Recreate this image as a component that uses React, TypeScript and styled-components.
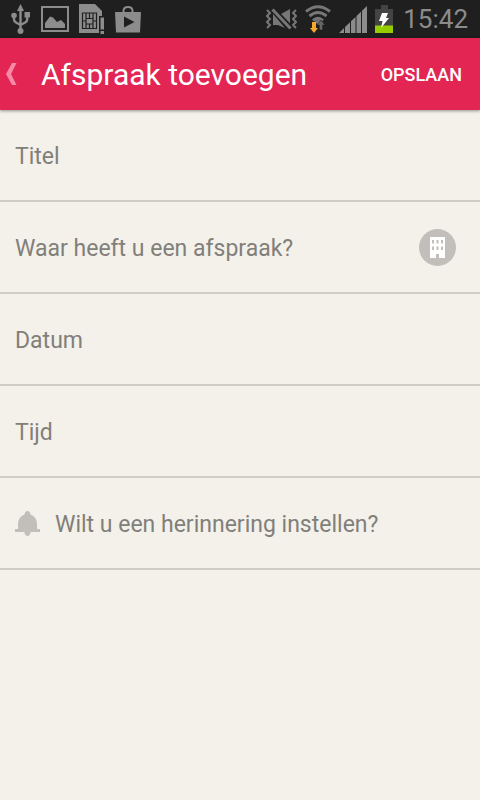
import React from "react";
import styled, { createGlobalStyle } from "styled-components";

const GlobalStyle = createGlobalStyle`
  *, *::before, *::after { box-sizing: border-box; }
  body {
    margin: 0;
    background: #f4f1ea;
    font-family: Roboto, "Noto Sans", sans-serif;
  }
`;

const Screen = styled.div`
  display: flex;
  flex-direction: column;
  min-height: 100vh;
  background: #f4f1ea;
`;

const StatusBar = styled.div`
  display: flex;
  align-items: center;
  justify-content: space-between;
  height: 38px;
  padding: 0 12px 0 10px;
  background: #1f1f1f;
  color: #8c8c8c;
`;

const StatusGroup = styled.div<{ $gap: number }>`
  display: flex;
  align-items: center;
  gap: ${(p) => p.$gap}px;

  svg { display: block; flex: none; }
`;

const Clock = styled.time`
  padding-left: 2px;
  font-size: 26px;
  line-height: 38px;
  color: #8c8c8c;
`;

const AppBar = styled.header`
  display: flex;
  align-items: center;
  height: 72px;
  padding: 0 18px 0 6px;
  background: #e22553;
  color: #fff;
  box-shadow: 0 1px 3px rgba(0, 0, 0, 0.4);
`;

const BackButton = styled.button`
  display: flex;
  width: 35px;
  padding: 0;
  border: 0;
  background: none;
  cursor: pointer;
`;

const Title = styled.h1`
  flex: 1;
  margin: 0;
  padding-top: 2px;
  font-size: 30px;
  line-height: 36px;
  font-weight: 400;
  white-space: nowrap;
`;

const SaveButton = styled.button`
  padding: 2px 0 0;
  border: 0;
  background: none;
  color: #fff;
  font: 500 18px/24px Roboto, "Noto Sans", sans-serif;
  cursor: pointer;
`;

const Form = styled.form`
  display: flex;
  flex-direction: column;
`;

const Row = styled.div`
  display: flex;
  align-items: center;
  height: 92px;
  padding: 0 24px 0 15px;
  border-bottom: 2px solid #cfccc6;
`;

const Field = styled.input`
  flex: 1;
  min-width: 0;
  height: 88px;
  padding: 2px 0 0;
  border: 0;
  outline: 0;
  background: none;
  color: #55534f;
  font: 400 23px/32px Roboto, "Noto Sans", sans-serif;

  &::placeholder { color: #817f7a; opacity: 1; }
`;

const PlaceButton = styled.button`
  display: flex;
  align-items: center;
  justify-content: center;
  width: 37px;
  height: 37px;
  padding: 0;
  border: 0;
  border-radius: 50%;
  background: #c2bfbb;
  cursor: pointer;
`;

const ReminderButton = styled.button`
  display: flex;
  align-items: center;
  flex: 1;
  gap: 15px;
  height: 88px;
  padding: 0;
  border: 0;
  background: none;
  color: #817f7a;
  font: 400 23px/32px Roboto, "Noto Sans", sans-serif;
  text-align: left;
  white-space: nowrap;
  cursor: pointer;
`;

const ReminderText = styled.span`
  padding-top: 3px;
`;

const UsbIcon = () => (
  <svg width="21" height="30" viewBox="0 0 21 30" fill="currentColor" aria-hidden="true">
    <path d="M10.5 0 14 7H7Z" />
    <circle cx="10.5" cy="27" r="3" />
    <circle cx="4" cy="11.5" r="2.8" />
    <path d="M14.5 8H20v5.5h-5.5z" />
    <path d="M10.5 5v21M4 12v3.5q0 2 2 3l4.500 2.500M17.200 12v3.500q0 2-2 3l-4.700 2.500" fill="none" stroke="currentColor" strokeWidth="2.4" />
  </svg>
);

const PictureIcon = () => (
  <svg width="28" height="26" viewBox="0 0 28 26" aria-hidden="true">
    <path d="M1 1h26v24H1z" fill="none" stroke="currentColor" strokeWidth="2" />
    <path d="M4 22v-5l5-6.500 3 1 4 4.500 4-2 4 4v4z" fill="currentColor" />
  </svg>
);

const SimIcon = () => (
  <svg width="26" height="30" viewBox="0 0 26 30" aria-hidden="true">
    <path d="M0 0h16l7 7v22H0z" fill="currentColor" />
    <path d="M3.500 9h14v15.500h-14zM7 14.500h7v5.500H7zM7 9v5.500M10.500 9v5.500M14 9v5.500M7 20v4.500M10.500 20v4.500M14 20v4.500M3.500 17H7M14 17h3.500" fill="none" stroke="#1f1f1f" strokeWidth="1.200" />
    <path d="M20 12h6v18h-6z" fill="#1f1f1f" />
    <path d="M21.500 13.500H25v12h-3.500zM21.500 27H25v3h-3.500z" fill="currentColor" />
  </svg>
);

const StoreIcon = () => (
  <svg width="26" height="27" viewBox="0 0 26 27" aria-hidden="true">
    <path d="M8.500 7V5q0-4 4.500-4t4.500 4v2" fill="none" stroke="currentColor" strokeWidth="2" />
    <path d="M0 6h26l-1 20.500H1z" fill="currentColor" />
    <path d="M9 10.500 19.500 16 9 21.500z" fill="#1f1f1f" />
  </svg>
);

const MutedIcon = () => (
  <svg width="31" height="22" viewBox="0 0 31 22" aria-hidden="true">
    <path d="M1 2l3 3-3 3 3 3-3 3 3 3-3 3M30 2l-3 3 3 3-3 3 3 3-3 3 3 3" fill="none" stroke="#777" strokeWidth="2" />
    <path d="M7 6l12 14-7-3H7z" fill="#777" />
    <path d="M14 6.500L24 1v16z" fill="#777" />
    <path d="M6 0l19 20" stroke="#1f1f1f" strokeWidth="5" />
    <path d="M6.500 1.500l18 19" stroke="#777" strokeWidth="3" />
  </svg>
);

const WifiIcon = () => (
  <svg width="26" height="28" viewBox="0 0 26 28" aria-hidden="true">
    <path d="M1 6.500Q13-3 25 6.500M4.500 11Q13 4 21.500 11M8 15.500q5-4.500 10 0" fill="none" stroke="#777" strokeWidth="3" />
    <path d="M9.500 16q3.500-2 7 0L13 20z" fill="#777" />
    <path d="M7 17h4v6h2l-4 5-4-5h2z" fill="#f4a82c" />
    <path d="M16 15l4 5h-2.300v5h-3.400v-5H12z" fill="#666" stroke="#1f1f1f" strokeWidth=".6" />
  </svg>
);

const SignalIcon = () => (
  <svg width="28" height="27" viewBox="0 0 28 27" fill="currentColor" aria-hidden="true">
    <path d="M0 27l5-5v5zM6 27v-6l5-4.800V27zM12 27V15.200l4.500-4.300V27zM17.500 27V10L22 5.700V27zM23 27V4.700L28 0v27z" />
  </svg>
);

const BatteryIcon = () => (
  <svg width="18" height="28" viewBox="0 0 18 28" aria-hidden="true">
    <path d="M6 0h7v4h5v24H0V4h6z" fill="#444" />
    <path d="M0 20.500h18V28H0z" fill="#97cc00" />
    <path d="M7 8h6l-2 5h3L6 23l1.500-7H4z" fill="#fff" />
  </svg>
);

const BackIcon = () => (
  <svg width="11" height="22" viewBox="0 0 11 22" aria-hidden="true">
    <path d="M6 0h4.500L5 11l5.500 11H6L0 11z" fill="#f78aa6" />
  </svg>
);

const BuildingIcon = () => (
  <svg width="15" height="21" viewBox="0 0 15 21" aria-hidden="true">
    <path d="M0 0h15v21H0z" fill="#fff" />
    <path d="M2 3h2v3.500H2zM6.500 3h2v3.500h-2zM11 3h2v3.500h-2zM2 9.500h2V13H2zM6.500 9.500h2V13h-2zM11 9.500h2V13h-2zM6 17h3v4H6z" fill="#c2bfbb" />
  </svg>
);

const BellIcon = () => (
  <svg width="25" height="25" viewBox="0 0 25 25" fill="#c2bfbb" aria-hidden="true">
    <path d="M9.500 3.500Q9.800 0 12.500 0t3 3.500Q22 6 22 13v5h3v3h-9.300q-.7 4-3.200 4t-3.200-4H0v-3h3v-5Q3 6 9.500 3.500z" />
  </svg>
);

export default function App() {
  return (
    <>
      <GlobalStyle />
      <Screen>
        <StatusBar>
          <StatusGroup $gap={10}>
            <UsbIcon />
            <PictureIcon />
            <SimIcon />
            <StoreIcon />
          </StatusGroup>
          <StatusGroup $gap={8}>
            <MutedIcon />
            <WifiIcon />
            <SignalIcon />
            <BatteryIcon />
            <Clock>15:42</Clock>
          </StatusGroup>
        </StatusBar>
        <AppBar>
          <BackButton type="button" aria-label="Terug">
            <BackIcon />
          </BackButton>
          <Title>Afspraak toevoegen</Title>
          <SaveButton type="submit" form="appointment">OPSLAAN</SaveButton>
        </AppBar>
        <Form id="appointment" onSubmit={(e) => e.preventDefault()}>
          <Row>
            <Field type="text" name="title" aria-label="Titel" placeholder="Titel" />
          </Row>
          <Row>
            <Field
              type="text"
              name="place"
              aria-label="Waar heeft u een afspraak?"
              placeholder="Waar heeft u een afspraak?"
            />
            <PlaceButton type="button" aria-label="Kies locatie">
              <BuildingIcon />
            </PlaceButton>
          </Row>
          <Row>
            <Field type="text" name="date" aria-label="Datum" placeholder="Datum" />
          </Row>
          <Row>
            <Field type="text" name="time" aria-label="Tijd" placeholder="Tijd" />
          </Row>
          <Row>
            <ReminderButton type="button">
              <BellIcon />
              <ReminderText>Wilt u een herinnering instellen?</ReminderText>
            </ReminderButton>
          </Row>
        </Form>
      </Screen>
    </>
  );
}
